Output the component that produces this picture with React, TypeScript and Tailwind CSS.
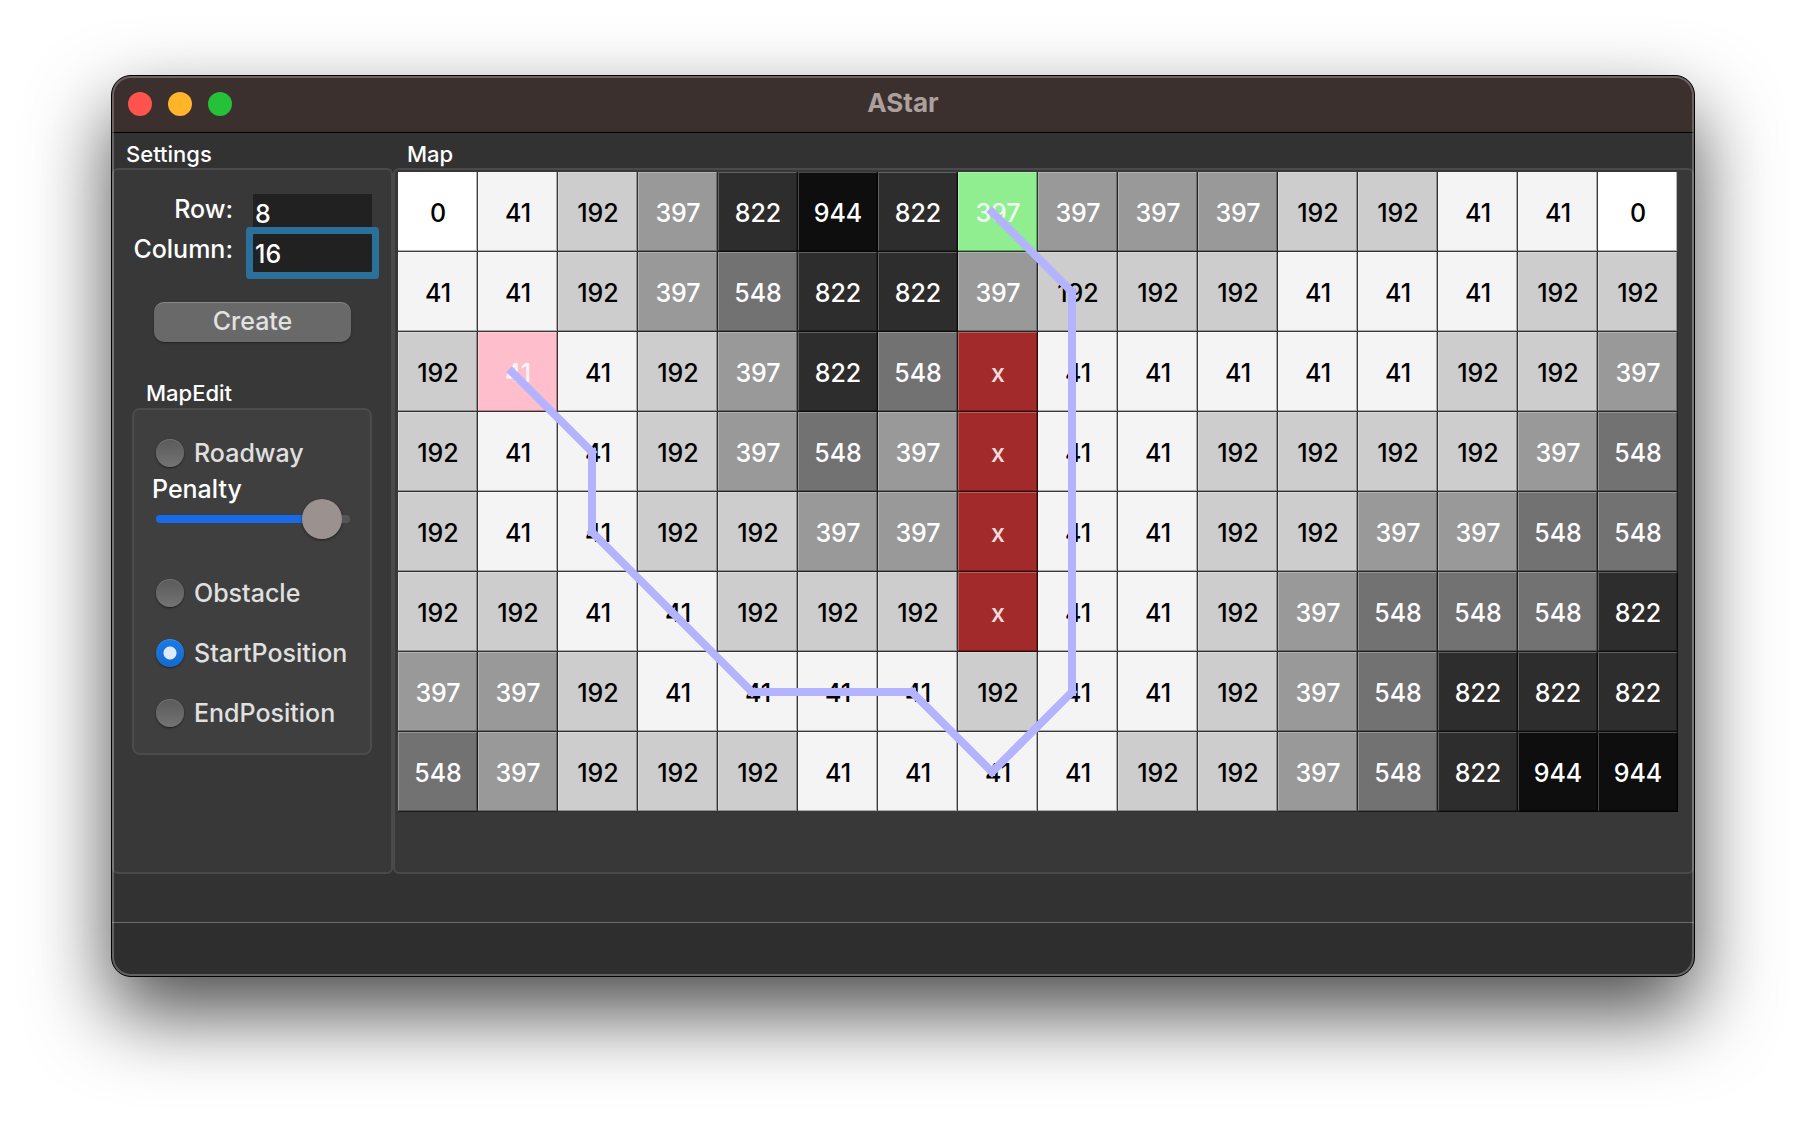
import { useState } from "react";

const CELLS = [
  "0 41 192 397 822 944 822 397 397 397 397 192 192 41 41 0",
  "41 41 192 397 548 822 822 397 192 192 192 41 41 41 192 192",
  "192 41 41 192 397 822 548 x 41 41 41 41 41 192 192 397",
  "192 41 41 192 397 548 397 x 41 41 192 192 192 192 397 548",
  "192 41 41 192 192 397 397 x 41 41 192 192 397 397 548 548",
  "192 192 41 41 192 192 192 x 41 41 192 397 548 548 548 822",
  "397 397 192 41 41 41 41 192 41 41 192 397 548 822 822 822",
  "548 397 192 192 192 41 41 41 41 192 192 397 548 822 944 944",
].map((row) => row.split(" "));

const SHADES: Record<string, string> = {
  "0": "bg-white text-black",
  "41": "bg-[#f4f4f4] text-black",
  "192": "bg-[#cdcdcd] text-black",
  "397": "bg-[#999999] text-white",
  "548": "bg-[#727272] text-white",
  "822": "bg-[#2d2d2d] text-white",
  "944": "bg-[#0e0e0e] text-white",
  x: "bg-[#a32a2a] text-white/85",
};

const START = { col: 1, row: 2 };
const END = { col: 7, row: 0 };

const ROUTE = [
  [1, 2], [2, 3], [2, 4], [3, 5], [4, 6], [5, 6], [6, 6], [7, 7],
  [8, 6], [8, 5], [8, 4], [8, 3], [8, 2], [8, 1], [7, 0],
];

function cellColor(value: string, col: number, row: number) {
  if (col === START.col && row === START.row) return "bg-[#ffbecb] text-white/85";
  if (col === END.col && row === END.row) return "bg-[#90ee90] text-white/85";
  return SHADES[value];
}

function MapGrid() {
  const points = ROUTE.map(([c, r]) => `${c * 80 + 34} ${r * 80 + 40}`);
  const segments = points.slice(1).map((point, i) => `M${points[i]}L${point}`).join("");
  return (
    <div className="relative">
      <div className="grid grid-cols-16">
        {CELLS.map((row, r) =>
          row.map((value, c) => (
            <button
              key={`${r}-${c}`}
              type="button"
              aria-label={`Row ${r + 1}, column ${c + 1}: ${value}`}
              className={`flex aspect-square items-center justify-center pt-0.5 text-[25px] leading-8 font-medium shadow-[inset_-1px_-1px_0_rgba(0,0,0,0.65),inset_-2px_-2px_0_rgba(0,0,0,0.3),inset_1px_1px_0_rgba(255,255,255,0.25)] ${cellColor(value, c, r)}`}
            >
              {value}
            </button>
          )),
        )}
      </div>
      <svg className="pointer-events-none absolute inset-0 h-full w-full" viewBox="0 0 1280 640" aria-hidden="true">
        <path d={segments} fill="none" stroke="#b3b3ff" strokeWidth="8" strokeLinecap="square" />
      </svg>
    </div>
  );
}

function Choice({ label, checked, onSelect }: { label: string; checked: boolean; onSelect: () => void }) {
  return (
    <label className="flex h-9 items-center gap-2.5 text-[#e0e0e0]">
      <input
        type="radio"
        name="edit-mode"
        checked={checked}
        onChange={onSelect}
        className="h-7 w-7 shrink-0 appearance-none rounded-full bg-linear-to-b from-[#5a5a5a] to-[#747474] shadow-[0_1px_2px_rgba(0,0,0,0.5),inset_0_1px_0_rgba(255,255,255,0.15)] checked:bg-[radial-gradient(circle,#dceafb_0_6px,transparent_7px),linear-gradient(#1a7ae8,#146acb)]"
      />
      {label}
    </label>
  );
}

const FIELD = "h-[38px] w-full bg-[#212121] pt-0.5 pl-0.5 text-white outline-none";

export default function App() {
  const [rows, setRows] = useState("8");
  const [columns, setColumns] = useState("16");
  const [mode, setMode] = useState("StartPosition");
  const [penalty, setPenalty] = useState(95);

  return (
    <div className="min-h-screen bg-white px-[111px] pt-[75px] pb-[147px] font-['Inter',sans-serif] text-[25px] leading-[30px] font-medium text-white">
      <main className="relative overflow-hidden rounded-[20px] border border-black bg-[#323232] shadow-[0_36px_80px_rgba(0,0,0,0.7)]">
        <div className="pointer-events-none absolute inset-0 z-10 rounded-[19px] border-2 border-white/25" />

        <header className="grid h-[57px] grid-cols-[1fr_auto_1fr] items-center border-b border-black bg-[#3b302e] px-4">
          <div className="flex gap-4">
            <button type="button" aria-label="Close" className="h-6 w-6 rounded-full bg-[#ff534d]" />
            <button type="button" aria-label="Minimize" className="h-6 w-6 rounded-full bg-[#ffb429]" />
            <button type="button" aria-label="Zoom" className="h-6 w-6 rounded-full bg-[#25c138]" />
          </div>
          <h1 className="pb-0.5 text-[26px] font-bold text-[#aca09e]">AStar</h1>
        </header>

        <div className="flex">
          <section className="flex w-[281px] shrink-0 flex-col">
            <h2 className="flex h-[35px] items-center pt-1.5 pl-3.5 text-[22px]">Settings</h2>
            <div className="flex-1 rounded-md border-2 border-[#4a4a4a] bg-[#383838]">
              <div className="grid grid-cols-[auto_119px] justify-end gap-x-5 pt-6 pr-[19px]">
                <label htmlFor="rows" className="h-10 text-right">Row:</label>
                <input id="rows" value={rows} onChange={(e) => setRows(e.target.value)} className={FIELD} />
                <label htmlFor="columns" className="h-10 text-right">Column:</label>
                <input
                  id="columns"
                  value={columns}
                  onChange={(e) => setColumns(e.target.value)}
                  className={`${FIELD} rounded-[1px] shadow-[0_0_0_7px_#2a709b]`}
                />
              </div>
              <div className="px-10 pt-7">
                <button
                  type="button"
                  className="flex h-10 w-full items-start justify-center rounded-[10px] bg-[#696969] pt-1 text-[#e2e2e2] shadow-[0_1px_2px_rgba(0,0,0,0.4),inset_0_1px_0_rgba(255,255,255,0.2)]"
                >
                  Create
                </button>
              </div>

              <h3 className="mt-9 pl-8 text-[22px]">MapEdit</h3>
              <div className="mr-[19px] ml-[18px] rounded-lg border-2 border-[#4c4c4c] bg-[#3f3f3f] pt-[25px] pr-5 pb-[22px] pl-[22px]">
                <Choice label="Roadway" checked={mode === "Roadway"} onSelect={() => setMode("Roadway")} />
                <label htmlFor="penalty" className="mt-1 -ml-1 block leading-7">Penalty</label>
                <div className="relative flex h-8 items-center">
                  <div className="h-2 w-full overflow-hidden rounded-full bg-[#555555]">
                    <div className="h-full bg-[#186ae8]" style={{ width: `${penalty}%` }} />
                  </div>
                  <input
                    id="penalty"
                    type="range"
                    min="0"
                    max="100"
                    value={penalty}
                    onChange={(e) => setPenalty(Number(e.target.value))}
                    className="absolute inset-x-0 h-10 w-full appearance-none bg-transparent [&::-webkit-slider-thumb]:h-10 [&::-webkit-slider-thumb]:w-10 [&::-webkit-slider-thumb]:appearance-none [&::-webkit-slider-thumb]:rounded-full [&::-webkit-slider-thumb]:bg-[#9b928f] [&::-webkit-slider-thumb]:shadow-[0_1px_3px_rgba(0,0,0,0.5)]"
                  />
                  <span className="pointer-events-none absolute right-0 h-2 w-2 rounded-r-full bg-[#555555]" />
                </div>
                <div className="mt-10 flex flex-col gap-6">
                  {["Obstacle", "StartPosition", "EndPosition"].map((name) => (
                    <Choice key={name} label={name} checked={mode === name} onSelect={() => setMode(name)} />
                  ))}
                </div>
              </div>
            </div>
          </section>

          <section className="flex min-w-0 flex-1 flex-col">
            <h2 className="flex h-[35px] items-center pt-1.5 pl-3.5 text-[22px]">Map</h2>
            <div className="flex-1 rounded-md border-2 border-[#4a4a4a] bg-[#383838] pt-0.5 pr-3.5 pb-[60px] pl-[3px]">
              <MapGrid />
            </div>
          </section>
        </div>

        <div className="h-12" />
        <footer className="h-[54px] border-t border-[#6b6b6b] bg-[#2e2e2e]" />
      </main>
    </div>
  );
}
